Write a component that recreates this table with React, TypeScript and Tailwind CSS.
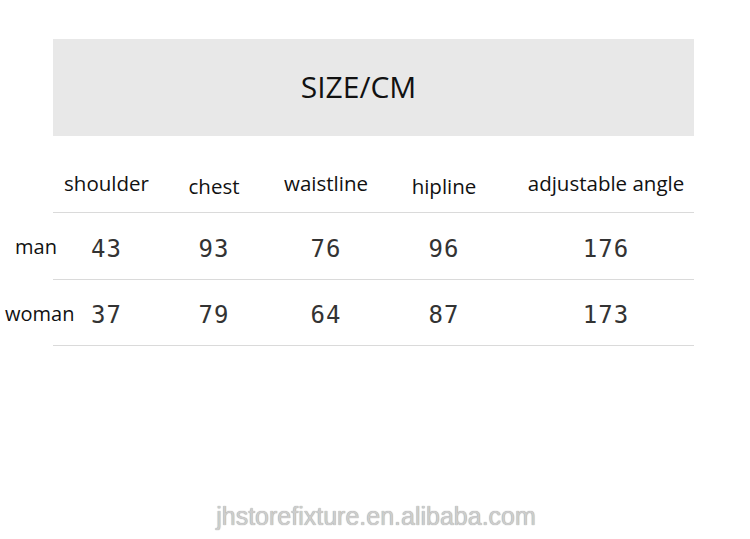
const columns = [
  { label: 'shoulder', width: 'w-[107px]', pad: 'pl-0', labelOffset: 'pt-0' },
  { label: 'chest', width: 'w-[108px]', pad: 'pl-0', labelOffset: 'pt-[3px]' },
  { label: 'waistline', width: 'w-[116px]', pad: 'pl-0', labelOffset: 'pt-0' },
  { label: 'hipline', width: 'w-[120px]', pad: 'pl-0', labelOffset: 'pt-[3px]' },
  { label: 'adjustable angle', width: 'w-[190px]', pad: 'pl-[14px]', labelOffset: 'pt-0' },
];

const rows = [
  { name: 'man', indent: 'pl-[15px]', values: ['43', '93', '76', '96', '176'], height: 'h-[67px]' },
  { name: 'woman', indent: 'pl-[5px]', values: ['37', '79', '64', '87', '173'], height: 'h-[66px]' },
];

export default function App() {
  return (
    <div className="w-[750px] h-[539px] bg-white pt-[39px] text-[#111] font-['Open_Sans','Noto_Sans',sans-serif] overflow-hidden">
      {/* title band */}
      <div className="ml-[53px] w-[641px] h-[97px] bg-[#e8e8e8] flex items-center justify-center pr-[30px]">
        <span className="text-[30px] leading-none pb-[1px]">SIZE/CM</span>
      </div>

      {/* header row */}
      <div className="ml-[53px] w-[641px] h-[77px] flex border-b border-[#dadada]">
        {columns.map((col) => (
          <div key={col.label} className={`${col.width} ${col.pad} shrink-0 flex justify-center pt-[33px]`}>
            <span className={`${col.labelOffset} text-[20.5px] leading-[28px] whitespace-nowrap`}>{col.label}</span>
          </div>
        ))}
      </div>

      {/* data rows */}
      {rows.map((row) => (
        <div key={row.name} className={`flex ${row.height}`}>
          <div className={`w-[53px] shrink-0 ${row.indent} flex items-center pt-[1px] overflow-visible`}>
            <span className="text-[20px] leading-[28px] whitespace-nowrap">{row.name}</span>
          </div>
          <div className="w-[641px] flex border-b border-[#dadada]">
            {columns.map((col, i) => (
              <div key={col.label} className={`${col.width} ${col.pad} shrink-0 flex items-center justify-center pt-[5px]`}>
                <span className="font-['DejaVu_Sans_Mono',monospace] text-[24px] leading-none text-[#333] tracking-[1px]">{row.values[i]}</span>
              </div>
            ))}
          </div>
        </div>
      ))}

      {/* watermark */}
      <div className="mt-[156px] flex justify-center pl-[2px]">
        <span className="font-['Liberation_Sans',Arial,sans-serif] text-[25px] leading-[28px] text-[#cdcdcd] [text-shadow:0_0_1px_#8a8a8a]">
          jhstorefixture.en.alibaba.com
        </span>
      </div>
    </div>
  );
}
